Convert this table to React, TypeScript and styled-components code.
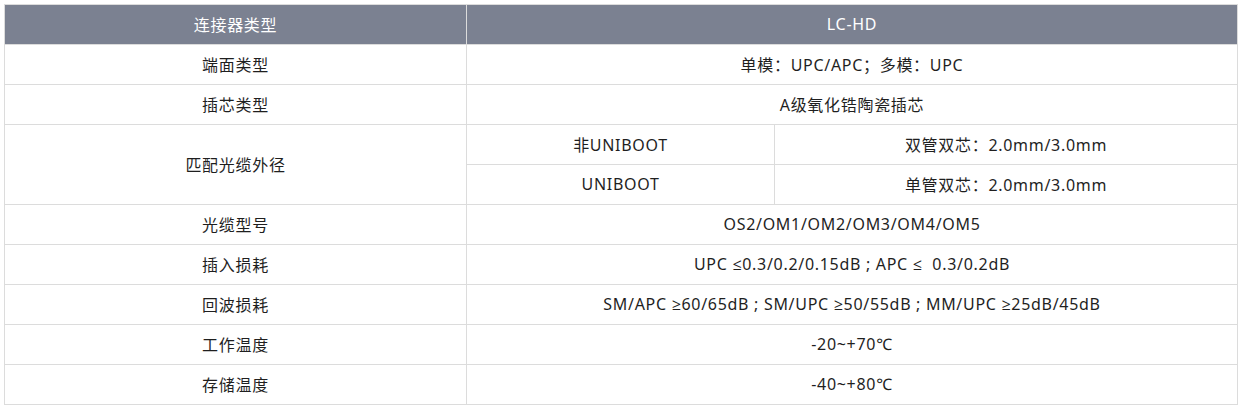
import React from "react";
import styled, { createGlobalStyle } from "styled-components";

const Global = createGlobalStyle`
  html, body { margin: 0; padding: 0; background: #fff; }
  body { font-family: "Noto Sans", "Open Sans", "Noto Sans CJK SC", sans-serif; }
`;

const Wrap = styled.div`
  padding: 4px;
`;

const Table = styled.table`
  width: 1233px;
  border-collapse: collapse;
  table-layout: fixed;
  font-size: 16px;
  letter-spacing: 0.7px;
  color: #1f1f1f;
`;

const Tr = styled.tr`
  height: 40px;
`;

const Th = styled.th`
  padding: 0 0 2px;
  background: #7b8191;
  color: #fff;
  font-weight: 400;
  border: 1px solid #dcdcdc;
  text-align: center;
  vertical-align: middle;
`;

const Td = styled.td`
  padding: 0 0 2px;
  border: 1px solid #dcdcdc;
  text-align: center;
  vertical-align: middle;
  white-space: pre;
`;

type Row = { label: string; value: string };

const rowsTop: Row[] = [
  { label: "端面类型", value: "单模：UPC/APC；多模：UPC" },
  { label: "插芯类型", value: "A级氧化锆陶瓷插芯" },
];

const rowsBottom: Row[] = [
  { label: "光缆型号", value: "OS2/OM1/OM2/OM3/OM4/OM5" },
  { label: "插入损耗", value: "UPC ≤0.3/0.2/0.15dB ; APC ≤  0.3/0.2dB" },
  { label: "回波损耗", value: "SM/APC ≥60/65dB ; SM/UPC ≥50/55dB ; MM/UPC ≥25dB/45dB" },
  { label: "工作温度", value: "-20~+70℃" },
  { label: "存储温度", value: "-40~+80℃" },
];

export default function App() {
  return (
    <Wrap>
      <Global />
      <Table>
        <colgroup>
          <col style={{ width: 462 }} />
          <col style={{ width: 308 }} />
          <col style={{ width: 463 }} />
        </colgroup>
        <thead>
          <Tr>
            <Th>连接器类型</Th>
            <Th colSpan={2}>LC-HD</Th>
          </Tr>
        </thead>
        <tbody>
          {rowsTop.map((r) => (
            <Tr key={r.label}>
              <Td>{r.label}</Td>
              <Td colSpan={2}>{r.value}</Td>
            </Tr>
          ))}
          <Tr>
            <Td rowSpan={2}>匹配光缆外径</Td>
            <Td>非UNIBOOT</Td>
            <Td>双管双芯：2.0mm/3.0mm</Td>
          </Tr>
          <Tr>
            <Td>UNIBOOT</Td>
            <Td>单管双芯：2.0mm/3.0mm</Td>
          </Tr>
          {rowsBottom.map((r) => (
            <Tr key={r.label}>
              <Td>{r.label}</Td>
              <Td colSpan={2}>{r.value}</Td>
            </Tr>
          ))}
        </tbody>
      </Table>
    </Wrap>
  );
}
